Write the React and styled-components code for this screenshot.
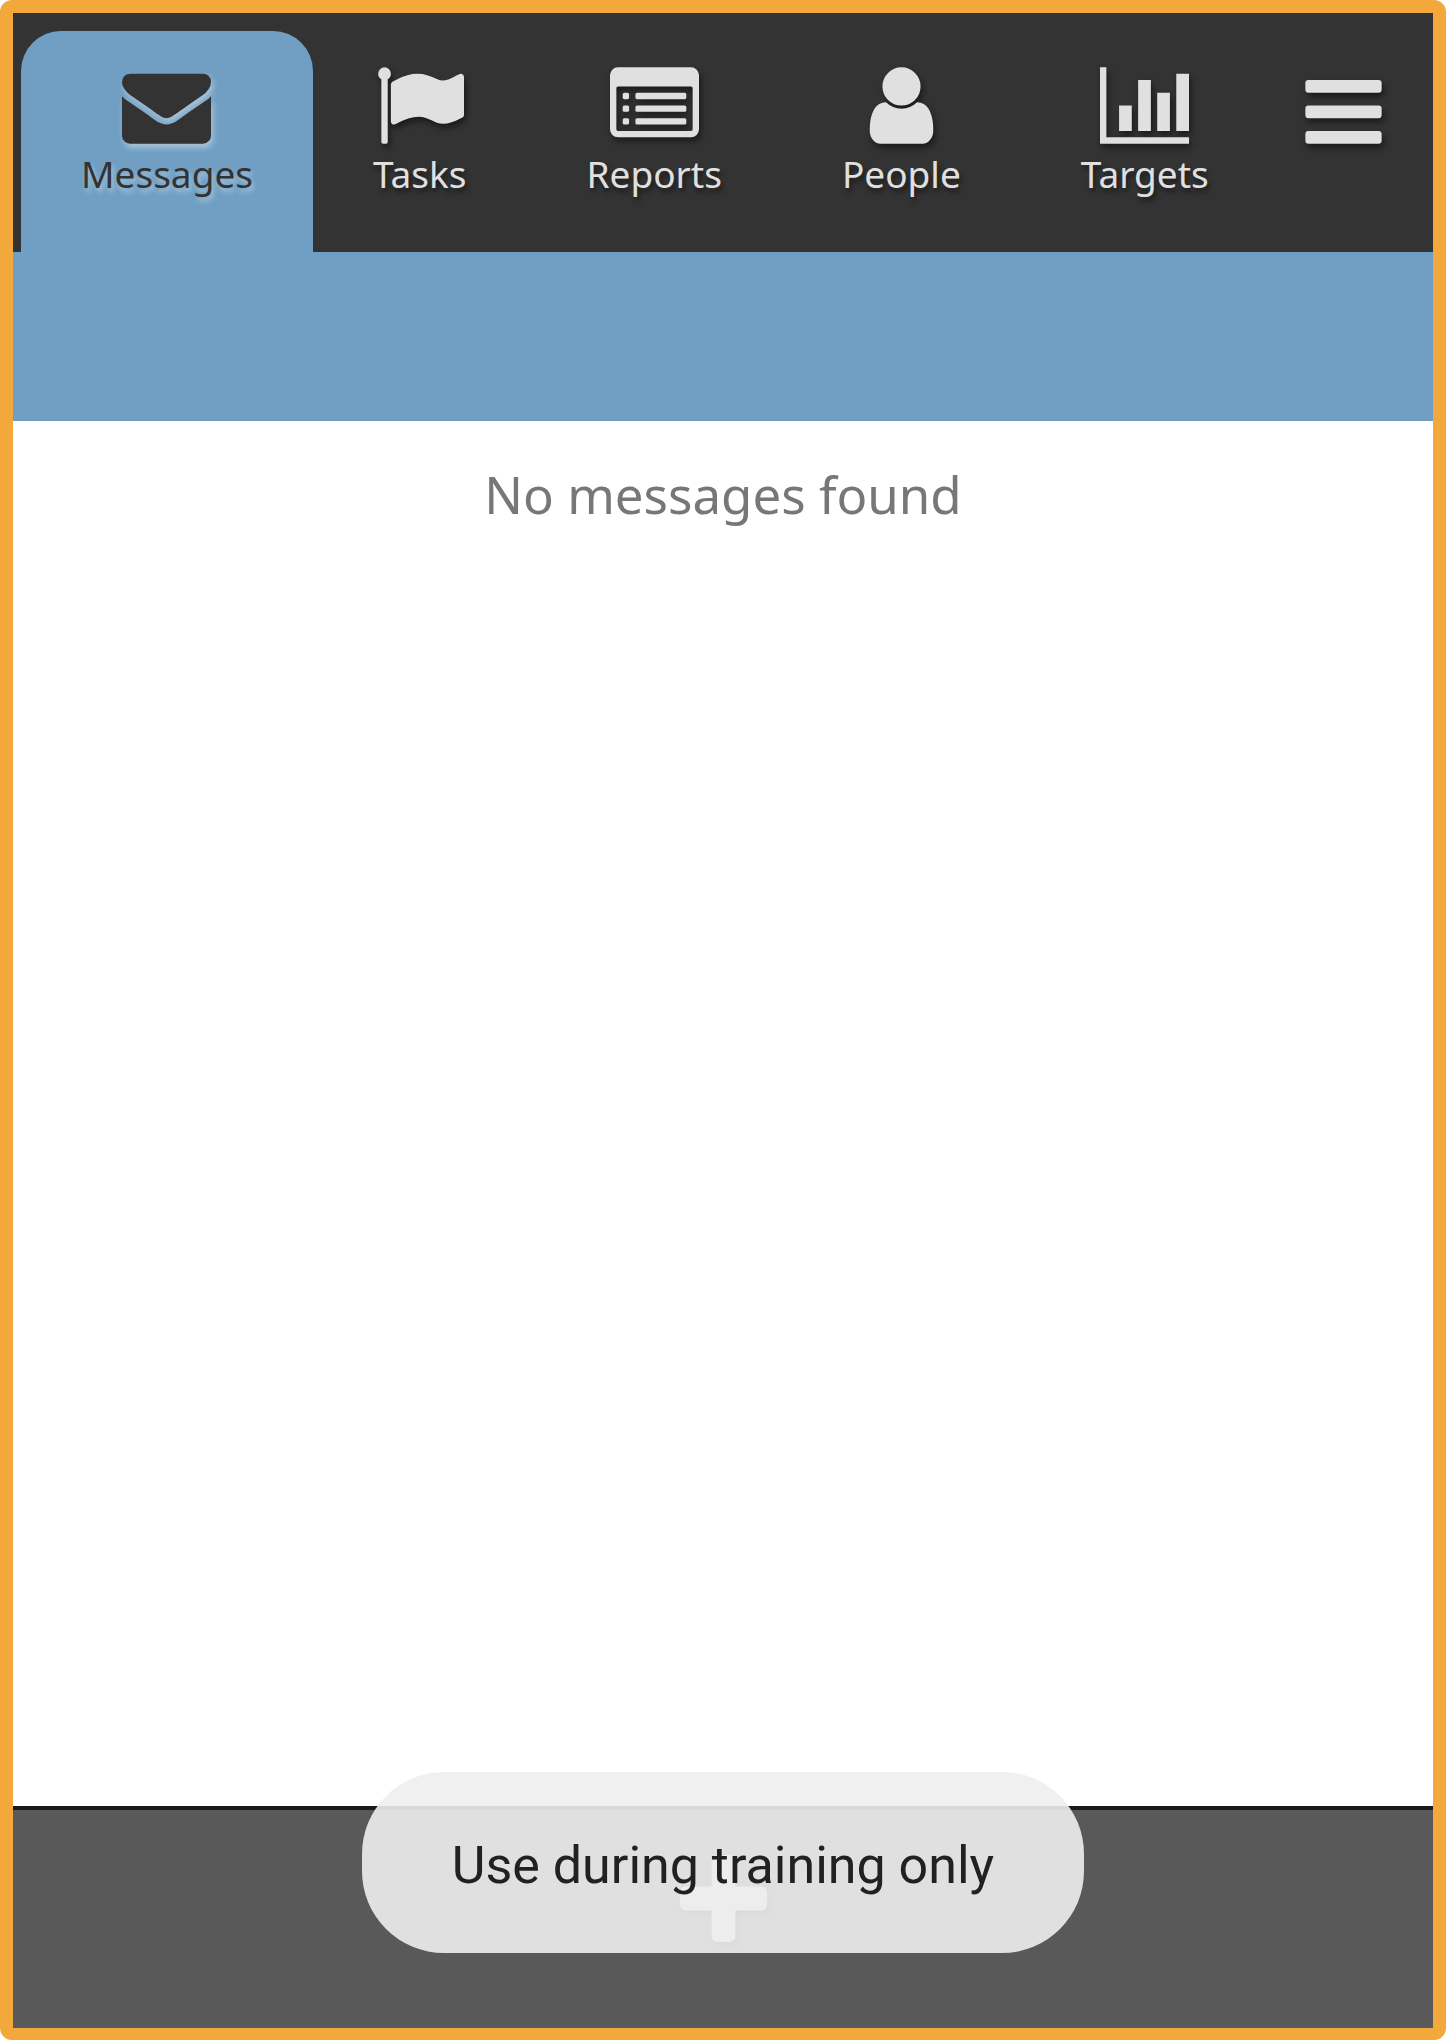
import React from "react";
import styled, { createGlobalStyle, css } from "styled-components";

const colors = {
  frame: "#f3a83b",
  header: "#333333",
  accent: "#709fc3",
  light: "#e0e0e0",
  muted: "#777777",
  footer: "#595959",
  rule: "#1a1a1a",
};

const GlobalStyle = createGlobalStyle`
  *, *::before, *::after { box-sizing: border-box; }
  body {
    margin: 0;
    background: #ffffff;
    font-family: "Noto Sans", sans-serif;
  }
`;

const Frame = styled.div`
  position: relative;
  display: flex;
  flex-direction: column;
  min-height: 100vh;
  border: 13px solid ${colors.frame};
  border-bottom-width: 12px;
  border-radius: 12px;
`;

const Header = styled.header`
  display: flex;
  align-items: stretch;
  padding: 18px 8px 0;
  background: ${colors.header};
`;

const Tabs = styled.nav`
  display: flex;
`;

const Glyph = styled.svg`
  display: block;
  width: ${(p) => p.$size || 89}px;
  height: ${(p) => p.$size || 89}px;
  fill: currentColor;
  filter: drop-shadow(2px 4px 3px var(--shadow));
`;

const itemStyle = css`
  --shadow: rgba(0, 0, 0, 0.5);
  color: ${colors.light};
  background: transparent;
  border: 0;
`;

const Tab = styled.a`
  ${itemStyle}
  display: flex;
  flex-direction: column;
  align-items: center;
  padding: 30px 60px 54px;
  border-radius: 40px 40px 0 0;
  font-size: 37px;
  line-height: 48px;
  text-decoration: none;
  text-shadow: 2px 4px 5px var(--shadow);
  ${(p) =>
    p.$active &&
    css`
      --shadow: rgba(255, 255, 255, 0.4);
      color: ${colors.header};
      background: ${colors.accent};
    `}
`;

const MenuButton = styled.button`
  ${itemStyle}
  display: flex;
  align-items: flex-start;
  padding: 30px 30px 0;
`;

const FilterBar = styled.div`
  height: 169px;
  background: ${colors.accent};
`;

const Content = styled.main`
  flex: 1;
  padding: 43px 24px;
  background: #ffffff;
`;

const EmptyNote = styled.p`
  margin: 0;
  color: ${colors.muted};
  font-size: 51px;
  line-height: 60px;
  text-align: center;
`;

const Footer = styled.footer`
  display: flex;
  justify-content: center;
  padding: 33px 24px 74px;
  border-top: 4px solid ${colors.rule};
  background: ${colors.footer};
`;

const AddButton = styled.button`
  ${itemStyle}
  padding: 0;
`;

const ToastLayer = styled.div`
  position: absolute;
  right: 0;
  bottom: 75px;
  left: 0;
  display: flex;
  justify-content: center;
  pointer-events: none;
`;

const Toast = styled.div`
  padding: 63px 90px 57px;
  border-radius: 82px;
  background: rgba(238, 238, 238, 0.9);
  color: #212121;
  font-family: Roboto, sans-serif;
  font-size: 52px;
  line-height: 61px;
`;

function Icon({ size, children }) {
  return (
    <Glyph $size={size} viewBox="0 0 1792 1792" aria-hidden="true">
      {children}
    </Glyph>
  );
}

const envelope = (
  <path d="M1792 710v794q0 66-47 113t-113 47h-1472q-66 0-113-47t-47-113v-794q44 49 101 87 362 246 497 345 57 42 92.5 65.5t94.5 48 110 24.5h2q51 0 110-24.5t94.5-48 92.5-65.5q170-123 498-345 57-39 100-87zm0-294q0 79-49 151t-122 123q-376 261-468 325-10 7-42.5 31t-54 38.5-52 32.5-57.5 27-50 9h-2q-23 0-50-9t-57.5-27-52-32.5-54-38.5-42.5-31q-91-64-262-182.5t-205-142.5q-62-42-117-115.5t-55-136.5q0-78 41.5-130t118.5-52h1472q65 0 112.5 47t47.5 113z" />
);

const flag = (
  <path d="M320 256q0 72-64 110v1266q0 13-9.5 22.5t-22.5 9.5h-64q-13 0-22.5-9.5t-9.5-22.5v-1266q-64-38-64-110 0-53 37.5-90.5t90.5-37.5 90.5 37.5 37.5 90.5zm1472 64v763q0 25-12.5 38.5t-39.5 27.5q-215 116-369 116-61 0-123.5-22t-108.5-48-115.5-48-142.5-22q-192 0-464 146-17 9-33 9-26 0-45-19t-19-45v-742q0-32 31-55 21-14 79-43 236-120 421-120 107 0 200 29t219 88q38 19 88 19 54 0 117.5-21t110-47 88-47 54.5-21q26 0 45 19t19 45z" />
);

const list = (
  <>
    <path
      fillRule="evenodd"
      d="M160 128h1472a160 160 0 0 1 160 160v1088a160 160 0 0 1-160 160h-1472a160 160 0 0 1-160-160v-1088a160 160 0 0 1 160-160zM160 512a32 32 0 0 0-32 32v832a32 32 0 0 0 32 32h1472a32 32 0 0 0 32-32v-832a32 32 0 0 0-32-32z"
    />
    {[640, 896, 1152].map((y) => (
      <React.Fragment key={y}>
        <rect x="256" y={y} width="128" height="128" rx="32" />
        <rect x="512" y={y} width="1024" height="128" rx="32" />
      </React.Fragment>
    ))}
  </>
);

const person = (
  <path d="M1536 1399q0 109-62.5 187t-150.5 78h-854q-88 0-150.5-78t-62.5-187q0-85 8.5-160.5t31.5-152 58.5-131 94-89 134.5-34.5q131 128 313 128t313-128q76 0 134.5 34.5t94 89 58.5 131 31.5 152 8.5 160.5zm-256-887q0 159-112.5 271.5t-271.5 112.5-271.5-112.5-112.5-271.5 112.5-271.5 271.5-112.5 271.5 112.5 112.5 271.5z" />
);

const chart = (
  <path d="M640 896v512h-256v-512h256zm384-512v1024h-256v-1024h256zm768 1152v128h-1792v-1536h128v1408h1664zm-384-896v768h-256v-768h256zm384-384v1152h-256v-1152h256z" />
);

const tabs = [
  { label: "Messages", href: "#messages", icon: envelope, active: true },
  { label: "Tasks", href: "#tasks", icon: flag },
  { label: "Reports", href: "#reports", icon: list },
  { label: "People", href: "#people", icon: person },
  { label: "Targets", href: "#targets", icon: chart },
];

export default function App() {
  return (
    <>
      <GlobalStyle />
      <Frame>
        <Header>
          <Tabs>
            {tabs.map((tab) => (
              <Tab
                key={tab.label}
                href={tab.href}
                $active={tab.active}
                aria-current={tab.active ? "page" : undefined}
              >
                <Icon>{tab.icon}</Icon>
                <span>{tab.label}</span>
              </Tab>
            ))}
          </Tabs>
          <MenuButton type="button" aria-label="Menu">
            <Icon>
              {[384, 896, 1408].map((y) => (
                <rect key={y} x="128" y={y} width="1536" height="256" rx="64" />
              ))}
            </Icon>
          </MenuButton>
        </Header>
        <FilterBar />
        <Content>
          <EmptyNote>No messages found</EmptyNote>
        </Content>
        <Footer>
          <AddButton type="button" aria-label="Add message">
            <Icon size={111}>
              <path d="M1600 800v192q0 40-28 68t-68 28h-416v416q0 40-28 68t-68 28h-192q-40 0-68-28t-28-68v-416h-416q-40 0-68-28t-28-68v-192q0-40 28-68t68-28h416v-416q0-40 28-68t68-28h192q40 0 68 28t28 68v416h416q40 0 68 28t28 68z" />
            </Icon>
          </AddButton>
        </Footer>
        <ToastLayer>
          <Toast role="status">Use during training only</Toast>
        </ToastLayer>
      </Frame>
    </>
  );
}
